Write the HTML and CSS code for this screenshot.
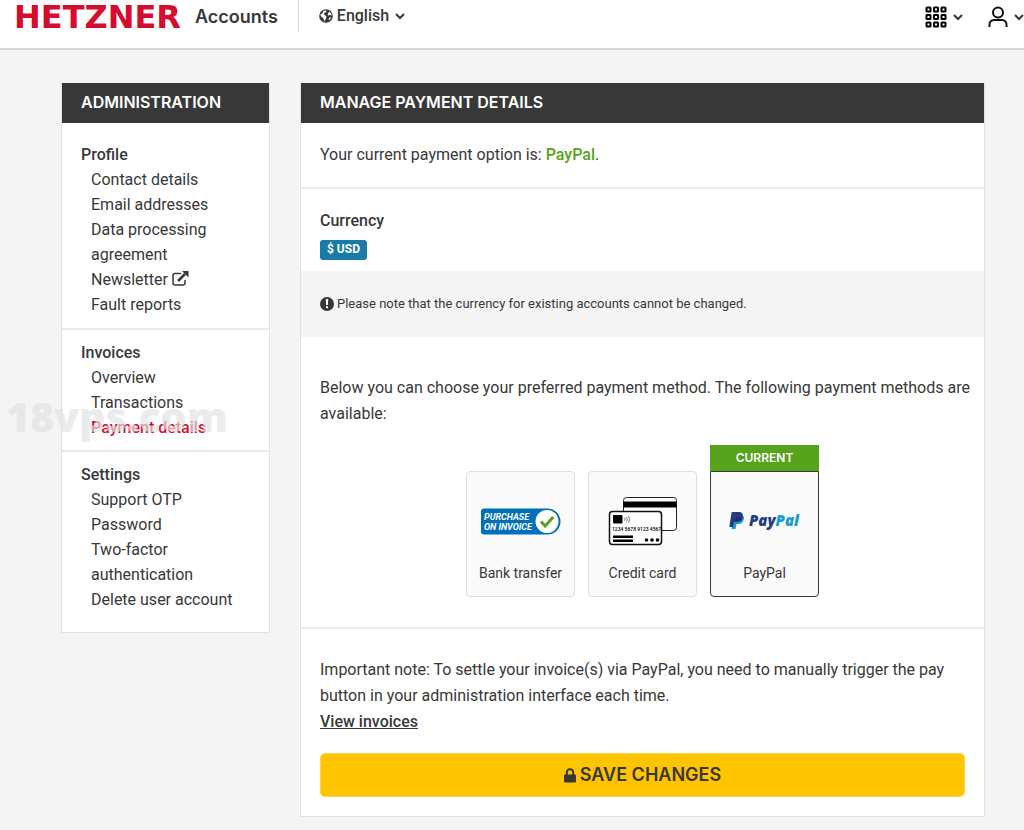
FILE: index.html
```html
<!DOCTYPE html>
<html lang="en">
<head>
<meta charset="utf-8">
<meta name="viewport" content="width=device-width, initial-scale=1">
<title>Hetzner Accounts</title>
<link rel="stylesheet" href="styles.css">
</head>
<body>
<header class="topbar">
  <a class="brand" href="#"><span class="brand-logo">HETZNER</span><span class="brand-name">Accounts</span></a>
  <button class="menu-button language" type="button">
    <svg width="14" height="14" viewBox="0 0 14 14" aria-hidden="true"><circle cx="7" cy="7" r="6.800" fill="#383838"/><path d="M4.500 1.800 7.500 1.600 7 3.200 5.400 3.800 4.800 5.200 6.400 6.600 7.600 8.200 6.600 10.200 5.400 12.400 4.600 9.800 3.400 8.400 1.800 7.200 1.600 5 3.200 4.800ZM10.200 2.600 12.200 4.600 12.600 6.400 11 6 9.400 6.600 8.600 5.400 9.400 4ZM10.200 8.600 12 8.400 11.200 10.400 9.600 11.200Z" fill="#fff"/></svg>
    English
    <svg class="chevron" width="10" height="7" viewBox="0 0 10 7" aria-hidden="true"><path d="M1 1l4 4 4-4"/></svg>
  </button>
  <div class="tools">
    <button class="menu-button" type="button" aria-label="Applications">
      <svg width="22" height="22" viewBox="0 0 22 22" fill="none" stroke="#000" stroke-width="2" aria-hidden="true"><g id="row"><rect x="1.500" y="1.500" width="4" height="4" rx=".5"/><rect x="9" y="1.500" width="4" height="4" rx=".5"/><rect x="16.500" y="1.500" width="4" height="4" rx=".5"/></g><use href="#row" y="7.500"/><use href="#row" y="15"/></svg>
      <svg class="chevron" width="10" height="7" viewBox="0 0 10 7" aria-hidden="true"><path d="M1 1l4 4 4-4"/></svg>
    </button>
    <button class="menu-button" type="button" aria-label="User account">
      <svg width="20" height="22" viewBox="0 0 20 22" fill="none" stroke="#111" stroke-width="2" aria-hidden="true"><circle cx="10" cy="6.500" r="5"/><path d="M1.500 21v-2.500c0-2.500 2-4.500 4.500-4.500h8c2.500 0 4.500 2 4.500 4.500V21"/></svg>
      <svg class="chevron" width="10" height="7" viewBox="0 0 10 7" aria-hidden="true"><path d="M1 1l4 4 4-4"/></svg>
    </button>
  </div>
</header>

<div class="page">
  <nav class="panel sidebar" aria-label="Administration">
    <h2 class="panel-title">ADMINISTRATION</h2>
    <section class="nav-group">
      <h3>Profile</h3>
      <ul>
        <li><a href="#">Contact details</a></li>
        <li><a href="#">Email addresses</a></li>
        <li><a href="#">Data processing agreement</a></li>
        <li><a href="#">Newsletter <svg class="external" width="17" height="15" viewBox="0 0 17 15" aria-hidden="true"><path d="M9 2.500H3Q1 2.500 1 4.500V12q0 2 2 2h8q2 0 2-2V9" fill="none" stroke="#383838" stroke-width="1.500"/><path d="M6 10l7-7" stroke="#383838" stroke-width="2.500"/><path d="M10 0h6.500v6.500z" fill="#383838"/></svg></a></li>
        <li><a href="#">Fault reports</a></li>
      </ul>
    </section>
    <section class="nav-group">
      <h3>Invoices</h3>
      <ul>
        <li><a href="#">Overview</a></li>
        <li><a href="#">Transactions</a></li>
        <li><a class="active" href="#" aria-current="page">Payment details</a></li>
      </ul>
    </section>
    <section class="nav-group">
      <h3>Settings</h3>
      <ul>
        <li><a href="#">Support OTP</a></li>
        <li><a href="#">Password</a></li>
        <li><a href="#">Two-factor authentication</a></li>
        <li><a href="#">Delete user account</a></li>
      </ul>
    </section>
  </nav>

  <main class="panel">
    <h1 class="panel-title">MANAGE PAYMENT DETAILS</h1>
    <p class="current-option">Your current payment option is: <strong>PayPal</strong>.</p>
    <section class="currency">
      <h2>Currency</h2>
      <span class="badge">$ USD</span>
    </section>
    <p class="notice">
      <svg width="14" height="14" viewBox="0 0 14 14" aria-hidden="true"><circle cx="7" cy="7" r="7" fill="#383838"/><path d="M5.800 2h2.400L7.900 8H6.100zM6 9.200h2v2H6z" fill="#fff"/></svg>
      Please note that the currency for existing accounts cannot be changed.
    </p>
    <form>
      <section class="methods">
        <p class="intro">Below you can choose your preferred payment method. The following payment methods are available:</p>
        <div class="options">
          <label class="option">
            <input type="radio" name="method" value="bank">
            <span class="card">
              <span class="art"><svg width="80" height="27" viewBox="0 0 80 27" aria-hidden="true"><path d="M3 .5h63.500a13 13 0 0 1 0 26H3q-3 0-3-3v-20q0-3 3-3z" fill="#0070ba"/><circle cx="66" cy="13.500" r="11.500" fill="#fff"/><path d="M60 13.500l4.200 4.500 8-9" fill="none" stroke="#57a31b" stroke-width="3"/><g class="invoice-text"><text x="3" y="12">PURCHASE</text><text x="3" y="22">ON INVOICE</text></g></svg></span>
              <span>Bank transfer</span>
            </span>
          </label>
          <label class="option">
            <input type="radio" name="method" value="card">
            <span class="card">
              <span class="art"><svg width="70" height="50" viewBox="0 0 70 50" aria-hidden="true"><rect x="15.500" y="1.500" width="53" height="33" rx="3" fill="#fff" stroke="#222"/><path d="M15.500 5.500h53v6h-53z"/><rect x="1.500" y="15.500" width="52" height="33" rx="3" fill="#fff" stroke="#111" stroke-width="1.500"/><rect x="5" y="19" width="9.500" height="8.500" rx="1"/><path d="M16.500 22q1 1.200 0 2.500M18.500 21q1.700 2.200 0 4.500M20.500 20q2.500 3.200 0 6.500" fill="none" stroke="#555" stroke-width=".8"/><text class="card-number" x="4" y="35">1234 5678 9123 4567</text><path d="M5 39.500h20v2.500H5zM5 43.500h20V46H5z"/><circle cx="38.500" cy="44" r="1.800"/><circle cx="44" cy="44" r="1.800"/><circle cx="49.500" cy="44" r="1.800"/></svg></span>
              <span>Credit card</span>
            </span>
          </label>
          <label class="option">
            <span class="flag">CURRENT</span>
            <input type="radio" name="method" value="paypal" checked>
            <span class="card">
              <span class="art"><svg width="72" height="20" viewBox="0 0 72 20" aria-hidden="true"><path d="M5.500 4h6c3 0 4 2 3.300 4.500-.7 3-3 4.500-6 4.500H7.500L6.500 18H2.500z" fill="#179bd7"/><path d="M3.200 1h6.500c3.300 0 4.600 1.800 4 4.700-.7 3.500-3 5-6.200 5H5L4 16H.3L2.500 1.700Q2.600 1 3.200 1z" fill="#253b80"/><path d="M7 6h6.500q0 4.700-6 4.700H6z" fill="#222d65"/><text class="paypal-text" x="20" y="15"><tspan fill="#253b80">Pay</tspan><tspan fill="#179bd7">Pal</tspan></text></svg></span>
              <span>PayPal</span>
            </span>
          </label>
        </div>
      </section>
      <section class="save">
        <p>Important note: To settle your invoice(s) via PayPal, you need to manually trigger the pay button in your administration interface each time.</p>
        <a class="invoices-link" href="#">View invoices</a>
        <button class="save-button" type="submit"><svg width="12" height="15" viewBox="0 0 12 15" aria-hidden="true"><path d="M2.800 7V4.500a3.200 3.200 0 0 1 6.400 0V7" fill="none" stroke="#383838" stroke-width="2"/><rect y="6.500" width="12" height="8" rx="1" fill="#383838"/></svg>SAVE CHANGES</button>
      </section>
    </form>
  </main>
</div>
<div class="watermark" aria-hidden="true">18vps.com</div>
</body>
</html>
```
FILE: styles.css
```css
* { box-sizing: border-box; }
body {
  margin: 0;
  position: relative;
  background: #f4f4f4;
  color: #383838;
  font: 16px/26px Roboto, "Liberation Sans", sans-serif;
  overflow-x: hidden;
}
h1, h2, h3, p, ul { margin: 0; padding: 0; }
ul { list-style: none; }
a { color: inherit; text-decoration: none; }
button { font: inherit; color: inherit; border: 0; background: none; padding: 0; cursor: pointer; }

.topbar {
  display: flex;
  align-items: flex-start;
  height: 50px;
  padding-left: 14px;
  background: #fff;
  border-bottom: 2px solid #d5d7d6;
}
.brand {
  display: flex;
  align-items: center;
  height: 34px;
  gap: 14px;
  padding-right: 20px;
}
.brand-logo { color: #d50c2d; font: bold 32px/34px "DejaVu Sans", sans-serif; }
.brand-name { font: 600 18px/34px Inter, sans-serif; }
.menu-button { display: flex; align-items: center; gap: 6px; height: 34px; font-weight: 500; }
.language { gap: 4px; height: 32px; padding-left: 20px; border-left: 1px solid #dcdcdc; }
.chevron { fill: none; stroke: #383838; stroke-width: 2; }
.language .chevron { margin-left: 2px; }
.tools { display: flex; gap: 25px; margin-left: auto; }

.page {
  display: grid;
  grid-template-columns: 209px minmax(0, 1fr);
  gap: 30px;
  align-items: start;
  padding: 33px 39px 13px 61px;
}
.panel { background: #fff; border: 1px solid #e1e2e3; border-top: 0; }
.panel-title {
  padding: 6px 19px 8px;
  background: #383838;
  color: #fff;
  font: 600 16px/26px Inter, sans-serif;
}
.nav-group { padding: 10px 19px; line-height: 25px; }
.nav-group + .nav-group { border-top: 2px solid #e9eaeb; }
.nav-group:first-of-type { padding-top: 19px; padding-bottom: 11px; }
.nav-group:last-child { padding-bottom: 20px; }
.nav-group h3 { font-size: 16px; font-weight: 500; }
.nav-group ul { padding-left: 10px; }
.active { color: #d50c2d; font-weight: 500; }
.external { vertical-align: -1px; }

.current-option { padding: 19px; border-bottom: 2px solid #e9eaeb; }
.current-option strong { color: #57a31b; font-weight: 500; }
.currency { display: flex; flex-direction: column; align-items: flex-start; gap: 6px; padding: 19px 19px 11px; }
.currency h2 { font-size: 16px; font-weight: 500; }
.badge { padding: 0 7px 2px; border-radius: 3px; background: #1a7ba7; color: #fff; font-size: 12px; line-height: 18px; font-weight: 700; }
.notice { display: flex; align-items: center; gap: 3px; padding: 20px 19px; background: #f4f4f4; font-size: 13px; }
.methods { padding: 38px 19px 30px; border-bottom: 2px solid #e9eaeb; }
.intro { margin-right: -12px; }
.options { display: flex; justify-content: center; align-items: flex-end; gap: 13px; margin-top: 18px; }
.option { position: relative; width: 109px; cursor: pointer; }
.option input { position: absolute; opacity: 0; }
.card {
  display: flex;
  flex-direction: column;
  align-items: center;
  height: 126px;
  padding-bottom: 10px;
  border: 1px solid #dddee0;
  border-radius: 4px;
  background: #fafafa;
  font-size: 14px;
  line-height: 26px;
}
.option input:checked + .card { border-color: #383838; border-radius: 0 0 4px 4px; }
.option input:focus-visible + .card { outline: 2px solid #1a7ba7; }
.art { display: flex; align-items: center; flex: 1; padding-top: 10px; }
.flag { display: block; background: #57a31b; color: #fff; text-align: center; font: 600 12px/26px Inter, sans-serif; }
.invoice-text { fill: #fff; font: italic 700 9px Roboto, sans-serif; }
.card-number { font: 500 5px Roboto, sans-serif; }
.paypal-text { font: italic 800 15px "Open Sans", sans-serif; }

.save { padding: 28px 19px 19px; }
.invoices-link { font-weight: 500; text-decoration: underline; }
.save-button {
  display: flex;
  align-items: center;
  justify-content: center;
  gap: 4px;
  width: 100%;
  height: 44px;
  margin-top: 18px;
  border: 1px solid #ffd34a;
  border-radius: 5px;
  background: #fec400;
  font: 600 18px/26px Inter, sans-serif;
}
.watermark {
  position: absolute;
  left: 6px;
  top: 391px;
  color: rgba(224, 226, 229, .7);
  font: 800 41px/50px "Open Sans", sans-serif;
  pointer-events: none;
}
```
